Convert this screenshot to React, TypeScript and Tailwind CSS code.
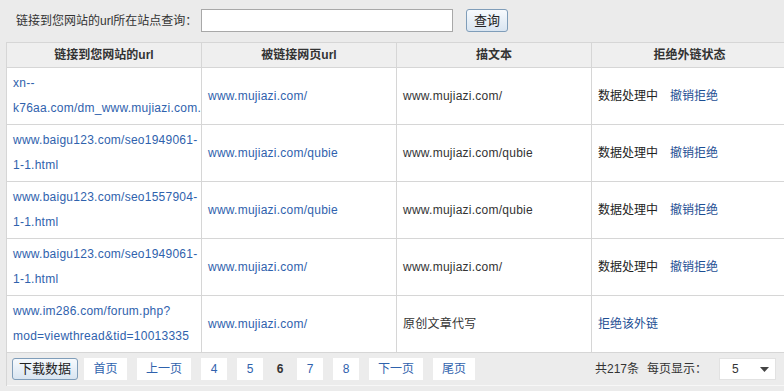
import React from "react";

const font = {
  fontFamily: '"Liberation Sans", Arial, "Noto Sans CJK SC", sans-serif',
};

type Row = {
  src: string[];
  target: string;
  anchor: string;
  status: "pending" | "refuse";
};

const rows: Row[] = [
  { src: ["xn--", "k76aa.com/dm_www.mujiazi.com."], target: "www.mujiazi.com/", anchor: "www.mujiazi.com/", status: "pending" },
  { src: ["www.baigu123.com/seo1949061-", "1-1.html"], target: "www.mujiazi.com/qubie", anchor: "www.mujiazi.com/qubie", status: "pending" },
  { src: ["www.baigu123.com/seo1557904-", "1-1.html"], target: "www.mujiazi.com/qubie", anchor: "www.mujiazi.com/qubie", status: "pending" },
  { src: ["www.baigu123.com/seo1949061-", "1-1.html"], target: "www.mujiazi.com/", anchor: "www.mujiazi.com/", status: "pending" },
  { src: ["www.im286.com/forum.php?", "mod=viewthread&tid=10013335"], target: "www.mujiazi.com/", anchor: "原创文章代写", status: "refuse" },
];

function PageBtn({ children, w }: { children: React.ReactNode; w: string }) {
  return (
    <div className={`h-[22px] ${w} bg-white flex items-center justify-center text-[12px] text-[#2f62ad]`}>
      {children}
    </div>
  );
}

export default function App() {
  return (
    <div className="w-[784px] h-[391px] bg-[#ebebeb] overflow-hidden text-[12px] text-[#333]" style={font}>
      {/* search bar */}
      <div className="flex items-center h-[42px] pl-[16px] pb-[1px]">
        <div className="w-[185px] text-[#333] text-[12px] whitespace-nowrap">链接到您网站的url所在站点查询：</div>
        <div className="w-[252px] h-[23px] bg-white border border-[#a8a8a8]" />
        <button className="ml-[13px] w-[42px] h-[23px] rounded-[3px] border border-[#7f9db9] bg-gradient-to-b from-[#f7fafd] to-[#d9e5f1] text-[13px] text-[#222] flex items-center justify-center">
          查询
        </button>
      </div>

      {/* table */}
      <div className="ml-[6px] w-[800px] border-l border-t border-[#d6d6d6]">
        <div className="grid grid-cols-[195px_195px_195px_195px] h-[25px] bg-[#efefef] border-b border-[#d6d6d6] font-bold text-[12px] text-[#333]">
          <div className="border-r border-[#d6d6d6] flex items-center justify-center">链接到您网站的url</div>
          <div className="border-r border-[#d6d6d6] flex items-center justify-center">被链接网页url</div>
          <div className="border-r border-[#d6d6d6] flex items-center justify-center">描文本</div>
          <div className="flex items-center justify-center">拒绝外链状态</div>
        </div>

        {rows.map((r, i) => (
          <div key={i} className="grid grid-cols-[195px_195px_195px_195px] h-[57px] bg-white border-b border-[#d6d6d6]">
            <div className="border-r border-[#d6d6d6] flex flex-col justify-center pl-[6px] text-[#2f62ad] leading-[25px] whitespace-nowrap overflow-hidden tracking-[0.25px]">
              {r.src.map((s, j) => (
                <div key={j}>{s}</div>
              ))}
            </div>
            <div className="border-r border-[#d6d6d6] flex items-center pl-[6px] text-[#2f62ad] tracking-[0.25px]">{r.target}</div>
            <div className="border-r border-[#d6d6d6] flex items-center pl-[6px] text-[#333] tracking-[0.25px]">{r.anchor}</div>
            <div className="flex items-center pl-[6px]">
              {r.status === "pending" ? (
                <>
                  <span className="text-[#222]">数据处理中</span>
                  <span className="ml-[12px] text-[#1d4e93]">撤销拒绝</span>
                </>
              ) : (
                <span className="text-[#1d4e93]">拒绝该外链</span>
              )}
            </div>
          </div>
        ))}

        {/* footer */}
        <div className="w-[778px] h-[33px] flex items-center pl-[5px] pr-[9px] bg-[#ececec] border-b border-[#f7f7f7]">
          <button className="w-[66px] h-[22px] rounded-[3px] border border-[#7f9db9] bg-gradient-to-b from-[#f7fafd] to-[#d9e5f1] text-[13px] text-[#222] flex items-center justify-center">
            下载数据
          </button>
          <div className="ml-[6px] flex items-center gap-[10px]">
            <PageBtn w="w-[43px]">首页</PageBtn>
            <PageBtn w="w-[54px]">上一页</PageBtn>
            <PageBtn w="w-[26px]">4</PageBtn>
            <PageBtn w="w-[26px]">5</PageBtn>
            <div className="w-[14px] text-center font-bold text-[#333]">6</div>
            <PageBtn w="w-[26px]">7</PageBtn>
            <PageBtn w="w-[26px]">8</PageBtn>
            <PageBtn w="w-[54px]">下一页</PageBtn>
            <PageBtn w="w-[42px]">尾页</PageBtn>
          </div>
          <div className="flex-1" />
          <span className="text-[#333]">共217条</span>
          <span className="ml-[8px] text-[#333]">每页显示：</span>
          <div className="ml-[12px] w-[57px] h-[22px] bg-white border border-[#e2e2e2] flex items-center pl-[12px] pr-[6px] justify-between text-[#333]">
            <span>5</span>
            <svg width="9" height="5" viewBox="0 0 9 5">
              <path d="M0 0 L9 0 L4.5 5 Z" fill="#444" />
            </svg>
          </div>
        </div>
      </div>
    </div>
  );
}
